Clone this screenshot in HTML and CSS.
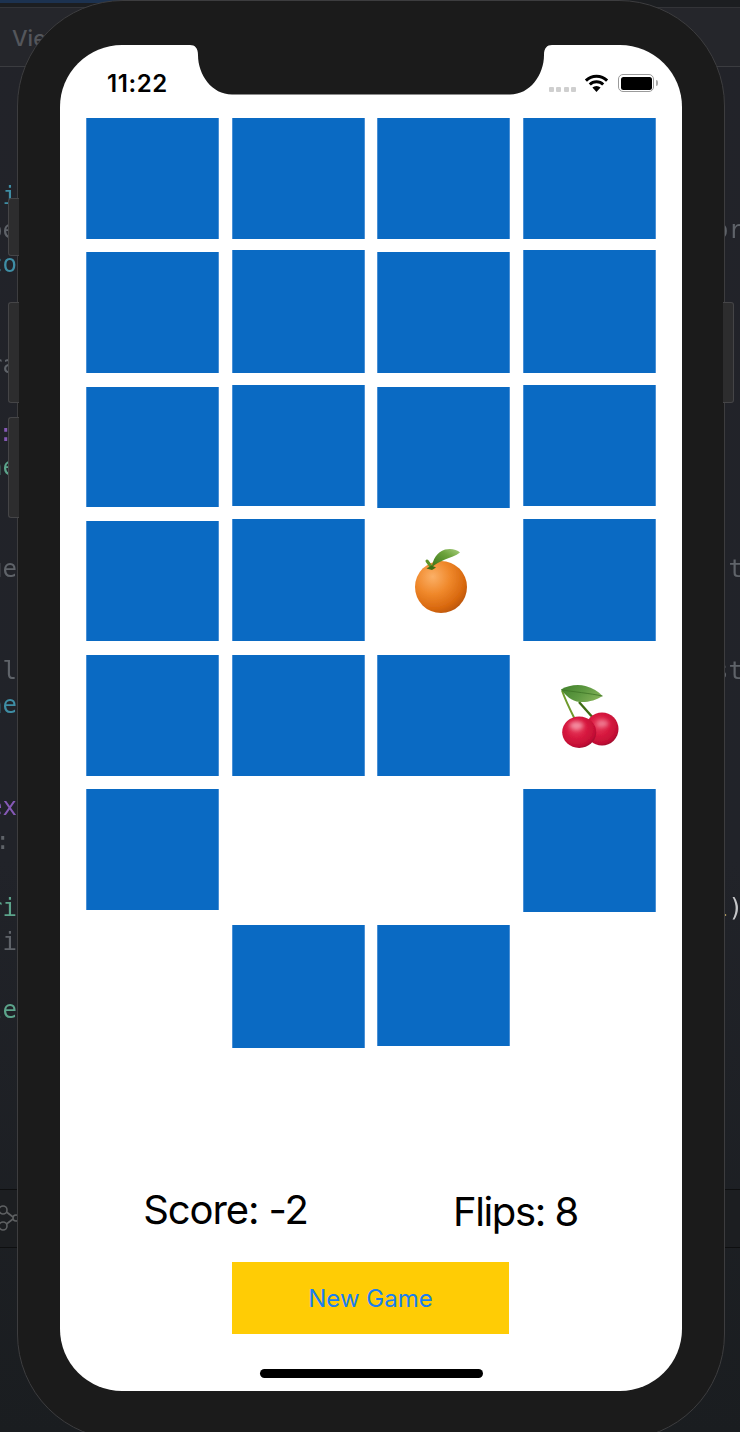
FILE: index.html
```html
<!DOCTYPE html>
<html lang="en">
<head>
<meta charset="utf-8">
<title>Memorize</title>
<link rel="stylesheet" href="styles.css">
</head>
<body>
<div class="stage">
  <div class="backdrop">
    <div class="topstrip"><span class="topstrip-blue"></span></div>
    <div class="toolbar"><span class="toolbar-label">View</span></div>
    <div class="editor">
      <div class="code code-left">
        <div class="line teal">.i</div>
        <div class="line gray">pe</div>
        <div class="line teal">co</div>
        <div class="line">&nbsp;</div>
        <div class="line">&nbsp;</div>
        <div class="line gray">ra</div>
        <div class="line">&nbsp;</div>
        <div class="line purple colon-a">:</div>
        <div class="line green">ne</div>
        <div class="line">&nbsp;</div>
        <div class="line">&nbsp;</div>
        <div class="line gray">ue</div>
        <div class="line">&nbsp;</div>
        <div class="line">&nbsp;</div>
        <div class="line gray">&nbsp;l</div>
        <div class="line teal">ne</div>
        <div class="line">&nbsp;</div>
        <div class="line">&nbsp;</div>
        <div class="line purple">ex</div>
        <div class="line gray colon-b">:</div>
        <div class="line">&nbsp;</div>
        <div class="line green">ri</div>
        <div class="line gray">si</div>
        <div class="line">&nbsp;</div>
        <div class="line green">le</div>
      </div>
      <div class="code code-right">
        <div class="line">&nbsp;</div>
        <div class="line gray">or</div>
        <div class="line">&nbsp;</div>
        <div class="line">&nbsp;</div>
        <div class="line">&nbsp;</div>
        <div class="line">&nbsp;</div>
        <div class="line">&nbsp;</div>
        <div class="line">&nbsp;</div>
        <div class="line">&nbsp;</div>
        <div class="line">&nbsp;</div>
        <div class="line">&nbsp;</div>
        <div class="line gray">&nbsp;t</div>
        <div class="line">&nbsp;</div>
        <div class="line">&nbsp;</div>
        <div class="line gray">st</div>
        <div class="line">&nbsp;</div>
        <div class="line">&nbsp;</div>
        <div class="line">&nbsp;</div>
        <div class="line">&nbsp;</div>
        <div class="line">&nbsp;</div>
        <div class="line">&nbsp;</div>
        <div class="line light"><span class="yellow">l</span>)</div>
      </div>
    </div>
    <div class="panel">
      <svg class="graph" viewBox="0 0 18 30" aria-hidden="true">
        <circle cx="3" cy="6" r="4"/><circle cx="3" cy="22" r="4"/><circle cx="16" cy="14" r="3"/>
        <path d="M6.5 8 13 13M6.5 20 13 15"/>
      </svg>
    </div>
    <div class="backdrop-foot"></div>
  </div>

  <div class="phone">
    <span class="sidebtn btn-a"></span>
    <span class="sidebtn btn-b"></span>
    <span class="sidebtn btn-c"></span>
    <span class="sidebtn btn-d"></span>
    <div class="screen">
      <svg class="notch" viewBox="0 0 622 52" aria-hidden="true">
        <path d="M130 0C135 0 138 3 138 10C138 30 152 49.5 172 49.5L450 49.5C470 49.5 484 30 484 10C484 3 487 0 492 0Z"/>
      </svg>
      <div class="status">
        <span class="time">11:22</span>
        <div class="status-icons">
          <div class="signal"><i></i><i></i><i></i><i></i></div>
          <svg class="wifi" viewBox="0 0 25 18" aria-hidden="true">
            <path class="wifi-arc" d="M1.9 6.6a15 15 0 0 1 21.2 0M5.8 10.5a9.5 9.5 0 0 1 13.4 0"/>
            <path class="wifi-fan" d="M12.5 18 8.4 13.6a6 6 0 0 1 8.2 0Z"/>
          </svg>
          <div class="battery"><span class="battery-level"></span></div>
        </div>
      </div>

      <div class="board">
        <div class="col">
          <div class="card h121"></div>
          <div class="card h121 g13"></div>
          <div class="card h120 g14"></div>
          <div class="card h120 g14"></div>
          <div class="card h121 g14"></div>
          <div class="card h121 g13"></div>
        </div>
        <div class="col col-b">
          <div class="card h121"></div>
          <div class="card h123 g11"></div>
          <div class="card h121 g12"></div>
          <div class="card h122 g13"></div>
          <div class="card h121 g14"></div>
          <div class="card h123 g13 matched"></div>
          <div class="card h123 g13"></div>
        </div>
        <div class="col col-c">
          <div class="card h121"></div>
          <div class="card h121 g13"></div>
          <div class="card h121 g14"></div>
          <div class="card h120 g13 face">
            <svg class="emoji emoji-orange" viewBox="413 546 60 70" role="img" aria-label="tangerine">
              <defs>
                <radialGradient id="orangeBody" cx="0.34" cy="0.3" r="0.82">
                  <stop offset="0" stop-color="#fbb067"/>
                  <stop offset="0.4" stop-color="#f0892c"/>
                  <stop offset="0.75" stop-color="#d9690f"/>
                  <stop offset="1" stop-color="#b04e08"/>
                </radialGradient>
                <linearGradient id="orangeLeaf" x1="0" y1="1" x2="1" y2="0">
                  <stop offset="0" stop-color="#3a7518"/>
                  <stop offset="0.6" stop-color="#6da33c"/>
                  <stop offset="1" stop-color="#a9cf80"/>
                </linearGradient>
                <filter id="soft" x="-10%" y="-10%" width="120%" height="120%"><feGaussianBlur stdDeviation="0.4"/></filter>
                <filter id="glow" x="-50%" y="-50%" width="200%" height="200%"><feGaussianBlur stdDeviation="2"/></filter>
              </defs>
              <circle cx="440" cy="587" r="26" fill="url(#orangeBody)" filter="url(#soft)"/>
              <path d="M431 567C431.5 560 436 552 444 549.500C450 548 456 549.500 459 552.500C455 556 449 557.500 444 559.500C439 561.500 434 564.500 431 567Z" fill="url(#orangeLeaf)"/>
              <path d="M426 561 430 566.500" stroke="#5f9429" stroke-width="3" fill="none" stroke-linecap="round"/>
              <path d="M425.500 568.500 430.500 565.500 435 567.500 431 570Z" fill="#3d6f14"/>
            </svg>
          </div>
          <div class="card h121 g14"></div>
          <div class="card h121 g13 matched"></div>
          <div class="card h121 g15"></div>
        </div>
        <div class="col col-d">
          <div class="card h121"></div>
          <div class="card h123 g11"></div>
          <div class="card h121 g12"></div>
          <div class="card h122 g13"></div>
          <div class="card h121 g14 face">
            <svg class="emoji emoji-cherry" viewBox="554.500 680.500 70 70" role="img" aria-label="cherries">
              <defs>
                <radialGradient id="cherryBody" cx="0.42" cy="0.38" r="0.68">
                  <stop offset="0" stop-color="#e8405f"/>
                  <stop offset="0.45" stop-color="#d81a40"/>
                  <stop offset="0.82" stop-color="#c30f35"/>
                  <stop offset="1" stop-color="#8f0c2a"/>
                </radialGradient>
                <linearGradient id="cherryLeaf" x1="0" y1="0" x2="1" y2="0.4">
                  <stop offset="0" stop-color="#3f7f2a"/>
                  <stop offset="0.6" stop-color="#5f9a42"/>
                  <stop offset="1" stop-color="#7fae55"/>
                </linearGradient>
              </defs>
              <path d="M578.500 701.500 594 719" stroke="#3f6c14" stroke-width="2.400" fill="none"/>
              <circle cx="601.500" cy="728.500" r="16.500" fill="url(#cherryBody)" filter="url(#soft)"/>
              <ellipse cx="602" cy="723" rx="6" ry="3.500" fill="#f59aab" opacity="0.7" filter="url(#glow)"/>
              <path d="M561.500 690C565 700 570 710 574 718" stroke="#6f9a2c" stroke-width="2" fill="none"/>
              <ellipse cx="578.700" cy="731.700" rx="17" ry="15.700" fill="url(#cherryBody)" filter="url(#soft)"/>
              <ellipse cx="576" cy="725" rx="7" ry="4" fill="#f8a5b5" opacity="0.8" filter="url(#glow)"/>
              <path d="M560.500 689C567 685 577 683.500 585 685.500C592 687.500 598 691 602 695.500C596 699.500 588 702 579 701.500C571 700.500 565 695 560.500 689Z" fill="url(#cherryLeaf)"/>
              <path d="M561 689.500C572 691 590 693 602 695.500" stroke="#3d7426" stroke-width="0.800" fill="none"/>
            </svg>
          </div>
          <div class="card h123 g13"></div>
        </div>
      </div>

      <div class="scores">
        <div class="score">Score: -2</div>
        <div class="score score-flips">Flips: 8</div>
      </div>
      <button class="new-game">New Game</button>
      <div class="home-bar"></div>
    </div>
  </div>
</div>
</body>
</html>
```

FILE: styles.css
```css
* { box-sizing: border-box; }
html, body { margin: 0; padding: 0; background: #1e2024; }

.stage {
  position: relative;
  width: 740px;
  height: 1432px;
  overflow: hidden;
}

/* Editor behind the simulator */
.backdrop {
  position: absolute;
  inset: 0;
  display: flex;
  flex-direction: column;
  background: linear-gradient(180deg, #222329 0%, #212329 60%, #1a1d20 100%);
}
.topstrip {
  height: 8px;
  background: #1c1e21;
  border-bottom: 1px solid #333438;
}
.topstrip-blue {
  display: block;
  width: 130px;
  height: 3px;
  background: #1c3250;
}
.toolbar {
  height: 59px;
  padding: 17px 0 0 12px;
  background: #25262b;
  border-bottom: 1px solid #3b3c40;
}
.toolbar-label {
  font: 500 22px/26px "Inter", sans-serif;
  color: #54565b;
}
.editor {
  flex: none;
  height: 1122px;
  padding-top: 112.7px;
  display: flex;
  justify-content: space-between;
}
.code {
  font: 24px/33.94px "DejaVu Sans Mono", monospace;
  white-space: nowrap;
  filter: blur(0.35px);
}
.code-left { width: 17px; }
.code-left .line { display: flex; justify-content: flex-end; }
.code-right { width: 26px; }
.line { height: 33.94px; }
.code-left .colon-a { padding-right: 4px; }
.code-left .colon-b { padding-right: 7px; }
.teal { color: #3f8ea5; }
.gray { color: #5f6369; }
.purple { color: #8559b5; }
.green { color: #5ca48b; }
.light { color: #c5c6c8; }
.yellow { color: #a8925a; }
.panel {
  height: 59px;
  background: #1c1e21;
  border-top: 1px solid #0e0f10;
  border-bottom: 1px solid #0e0f10;
  padding-top: 14px;
}
.graph {
  display: block;
  width: 18px;
  height: 30px;
  fill: none;
  stroke: #5e6062;
  stroke-width: 1.6;
}
.backdrop-foot { flex: 1; }

/* Simulator */
.phone {
  position: absolute;
  left: 17px;
  top: 0;
  width: 708px;
  height: 1440px;
  padding: 44px 42px 0;
  background: #1b1b1b;
  border: 1px solid #3d3d3f;
  border-radius: 106px;
}
.sidebtn {
  position: absolute;
  width: 11px;
  background: #2d2d2e;
  border: 1px solid #454547;
}
.btn-a, .btn-b, .btn-c {
  left: -10px;
  border-right: 0;
  border-radius: 3px 0 0 3px;
}
.btn-a { top: 197px; height: 58px; }
.btn-b { top: 301px; height: 101px; }
.btn-c { top: 416px; height: 101px; }
.btn-d {
  right: -10px;
  top: 301px;
  height: 101px;
  border-left: 0;
  border-radius: 0 3px 3px 0;
}
.screen {
  position: relative;
  width: 622px;
  height: 1346px;
  background: #fff;
  border-radius: 62px;
  overflow: hidden;
  font-family: "Inter", "Liberation Sans", sans-serif;
}
.notch {
  position: absolute;
  left: 0;
  top: 0;
  width: 622px;
  height: 52px;
  fill: #1b1b1b;
}
.status {
  height: 73px;
  padding: 26px 24px 23px 47px;
  display: flex;
  align-items: center;
  justify-content: space-between;
}
.time {
  font-weight: 600;
  font-size: 24px;
  line-height: 24px;
  letter-spacing: 0.6px;
  margin-top: 2px;
  color: #000;
}
.status-icons {
  display: flex;
  align-items: center;
}
.signal {
  display: flex;
  gap: 2.500px;
  margin: 12px 8px 0 0;
}
.signal i {
  width: 5px;
  height: 5px;
  border-radius: 1px;
  background: #cfcfcf;
}
.wifi { width: 25px; height: 18px; margin-right: 9px; }
.wifi-arc { fill: none; stroke: #000; stroke-width: 3; }
.wifi-fan { fill: #000; }
.battery {
  position: relative;
  width: 36px;
  height: 18px;
  padding: 1.500px;
  border: 1.500px solid #9b9b9b;
  border-radius: 5px;
  margin-right: 4px;
}
.battery::after {
  content: "";
  position: absolute;
  right: -5px;
  top: 4.500px;
  width: 2px;
  height: 6px;
  border-radius: 0 2px 2px 0;
  background: #aaa;
}
.battery-level {
  display: block;
  width: 100%;
  height: 100%;
  background: #000;
  border-radius: 2.500px;
}

/* Cards */
.board {
  display: flex;
  height: 930px;
  padding-left: 26px;
}
.col {
  display: flex;
  flex-direction: column;
  width: 133px;
}
.col-b { margin-left: 13px; }
.col-c { margin-left: 12px; }
.col-d { margin-left: 13px; }
.card {
  flex: none;
  background: #0a6ac3;
  box-shadow: inset 1px 0 #4a90d5, inset -1px 0 #4a90d5;
}
.h120 { height: 120px; }
.h121 { height: 121px; }
.h122 { height: 122px; }
.h123 { height: 123px; }
.g11 { margin-top: 11px; }
.g12 { margin-top: 12px; }
.g13 { margin-top: 13px; }
.g14 { margin-top: 14px; }
.g15 { margin-top: 15px; }
.matched { visibility: hidden; }
.face {
  background: #fff;
  box-shadow: none;
  display: flex;
  align-items: center;
  justify-content: center;
}
.emoji { display: block; flex: none; }
.emoji-orange { width: 60px; height: 70px; }
.emoji-cherry { width: 70px; height: 70px; }

/* Footer */
.scores {
  display: grid;
  grid-template-columns: 279px 279px;
  column-gap: 11px;
  margin: 138px 0 0 26px;
  height: 48px;
}
.score {
  font-size: 40px;
  line-height: 48px;
  letter-spacing: -1.1px;
  text-align: center;
  color: #000;
}
.score-flips { padding-top: 2px; letter-spacing: -1.4px; }
.new-game {
  display: block;
  width: 277px;
  height: 72px;
  margin: 28px 0 0 172px;
  padding: 0;
  border: 0;
  background: #ffcc05;
  color: #1a7ff0;
  font-family: inherit;
  font-size: 24px;
}
.home-bar {
  width: 223px;
  height: 9px;
  margin: 35px 0 0 200px;
  border-radius: 5px;
  background: #000;
}
```
